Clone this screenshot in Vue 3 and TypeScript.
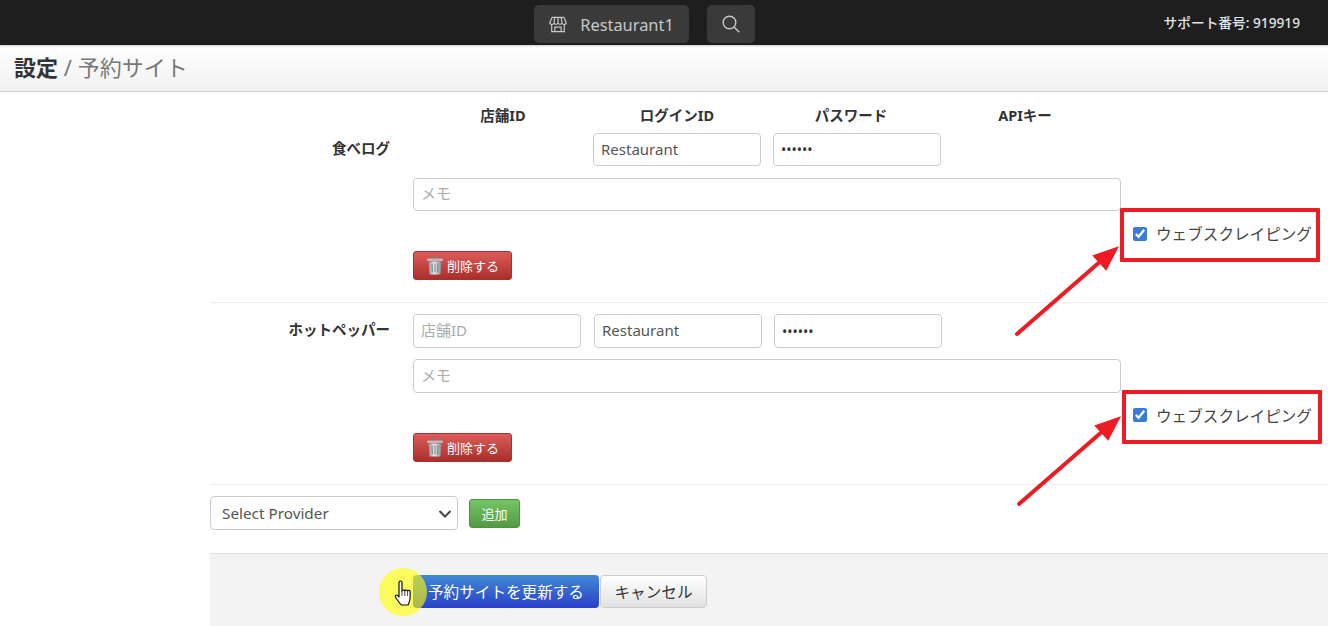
<script setup lang="ts">
// Reservation-site settings page. Each provider row has credentials, a memo,
// a scraping checkbox and a delete button. The red boxes and arrows are
// screenshot annotations, so they sit on an overlay.

interface Provider {
  name: string
  showShopId: boolean
}

const providers: Provider[] = [
  { name: '食べログ', showShopId: false },
  { name: 'ホットペッパー', showShopId: true },
]

const columns = ['店舗ID', 'ログインID', 'パスワード', 'APIキー']

const boxes = [
  { left: '1120px', top: '208px' },
  { left: '1122px', top: '390px' },
]
</script>

<template>
  <div class="page">
    <header class="topbar">
      <button class="top-btn shop-btn" type="button">
        <svg width="18" height="17" viewBox="0 0 20 18" fill="none" stroke="#c8c8c8" stroke-width="1.3">
          <path d="M3.5 1h13l2.500 5.500a2.200 2.200 0 0 1-4.500.5 2.300 2.300 0 0 1-4.500 0 2.300 2.300 0 0 1-4.500 0 2.200 2.200 0 0 1-4.500-.500z" />
          <path d="M3 9v8h14V9M6.500 1 5.500 7M13.500 1l1 6M10 1v6M6.500 17v-5h7v5" />
        </svg>
        <span>Restaurant1</span>
      </button>
      <button class="top-btn search-btn" type="button">
        <svg width="18" height="18" viewBox="0 0 18 18" fill="none" stroke="#c8c8c8" stroke-width="1.4">
          <circle cx="7.500" cy="7.500" r="6.300" />
          <path d="m12 12 5.300 5.300" />
        </svg>
      </button>
      <div class="support">サポート番号: 919919</div>
    </header>

    <div class="subheader">
      <h1><strong>設定</strong> / 予約サイト</h1>
    </div>

    <main class="content">
      <div class="col-heads">
        <span v-for="c in columns" :key="c">{{ c }}</span>
      </div>

      <section v-for="p in providers" :key="p.name" class="provider">
        <label class="provider-name">{{ p.name }}</label>
        <div class="creds">
          <input v-if="p.showShopId" class="field shop-id" placeholder="店舗ID" />
          <div v-else class="spacer" />
          <input class="field" value="Restaurant" />
          <input class="field secret" type="password" value="secret" />
        </div>
        <input class="field memo" placeholder="メモ" />
        <label class="scrape">
          <input type="checkbox" checked />
          <span>ウェブスクレイピング</span>
        </label>
        <button class="btn danger" type="button">
          <svg width="18" height="19" viewBox="0 0 18 19">
            <defs>
              <linearGradient id="can" x1="0" x2="1" y1="0" y2="0">
                <stop offset="0" stop-color="#8f9396" />
                <stop offset="0.45" stop-color="#eceeef" />
                <stop offset="1" stop-color="#85898c" />
              </linearGradient>
            </defs>
            <path d="M6.500 2.500V1h5v1.500" fill="none" stroke="#7d8184" />
            <rect x="1" y="2.500" width="16" height="2.500" rx="1" fill="#b9bcbe" />
            <path d="M2.500 5.500h13l-1 13h-11z" fill="url(#can)" />
            <path d="M6 7.500l.3 9M9 7.500v9M12 7.500l-.3 9" stroke="#777b7e" stroke-width="1" />
          </svg>
          削除する
        </button>
      </section>

      <div class="add-row">
        <div class="select-wrap">
          <select class="provider-select">
            <option>Select Provider</option>
          </select>
          <svg class="chevron" width="14" height="8" viewBox="0 0 14 8" fill="none" stroke="#444" stroke-width="2">
            <path d="m1.500 1 5.500 5.500L12.500 1" />
          </svg>
        </div>
        <button class="btn success" type="button">追加</button>
      </div>

      <footer class="actions">
        <button class="btn primary" type="button">予約サイトを更新する</button>
        <button class="btn plain" type="button">キャンセル</button>
      </footer>
    </main>

    <!-- screenshot annotations -->
    <div v-for="(b, i) in boxes" :key="i" class="red-box" :style="b" />
    <svg class="arrows" width="1328" height="626" viewBox="0 0 1328 626">
      <g fill="#ed1c24" stroke="#ed1c24" stroke-linecap="round">
        <path d="M1017 334 1102 260" stroke-width="4" fill="none" />
        <path d="M1117 248 1094 256 1106 269z" stroke-width="2" />
        <path d="M1019 504 1104 430" stroke-width="4" fill="none" />
        <path d="M1119 418 1096 426 1108 439z" stroke-width="2" />
      </g>
    </svg>

    <div class="highlight" />
    <svg class="hand" width="20" height="28" viewBox="0 0 20 28">
      <path
        d="M5 2.500c0-2 3-2 3 0V11c0-1.500 2.500-1.500 2.800 0 .2-1.300 2.600-1.300 2.800.2.300-1.200 2.600-1 2.600.6 0 3 .3 6-.6 9-.5 1.800-1 3-1.500 4.200H7.500C6 24 4 21 2 18c-1-1.500-1-3 .5-3 1 0 1.800 1 2.500 2z"
        fill="#fff"
        stroke="#111"
        stroke-width="1.200"
        stroke-linejoin="round"
      />
      <path d="M8 11v5M10.800 11v5M13.600 11.500V16" stroke="#111" stroke-width="0.800" fill="none" />
    </svg>
  </div>
</template>

<style scoped>
.page {
  position: relative;
  width: 1328px;
  height: 626px;
  overflow: hidden;
  background: #fff;
  font-family: "Noto Sans", "Noto Sans CJK JP", sans-serif;
  color: #333;
}

.topbar {
  display: flex;
  align-items: center;
  gap: 18px;
  height: 45px;
  padding: 3px 28px 0 534px;
  box-sizing: border-box;
  background: #1e1e1e;
}
.top-btn {
  display: flex;
  align-items: center;
  justify-content: center;
  height: 38px;
  border: 0;
  border-radius: 5px;
  background: #3a3a3a;
  color: #c8c8c8;
  font: inherit;
  font-size: 16px;
}
.shop-btn {
  width: 155px;
  gap: 13px;
}
.shop-btn span {
  font-size: 16.400px;
}
.search-btn {
  width: 48px;
}
.support {
  margin: 0 0 5px auto;
  color: #e4e4e4;
  font-size: 13.700px;
  font-weight: 500;
}

.subheader {
  height: 47px;
  box-sizing: border-box;
  padding-left: 14px;
  border-bottom: 1px solid #d0d0d0;
  background: linear-gradient(#fff, #f1f1f1);
  box-shadow: inset 0 2px 2px -1px #ccc;
}
h1 {
  margin: 0;
  font-size: 22px;
  font-weight: 400;
  line-height: 44px;
  color: #777;
}
h1 strong {
  color: #333;
}

.content {
  margin-left: 210px;
}
.col-heads {
  display: grid;
  grid-template-columns: repeat(4, 174px);
  align-items: center;
  height: 41px;
  padding: 3px 0 0 206px;
  box-sizing: border-box;
  font-size: 14.500px;
  font-weight: 700;
  text-align: center;
}

.provider {
  display: grid;
  grid-template-columns: 180px 708px 200px;
  column-gap: 23px;
  grid-template-rows: 33.400px 44.800px 40px 29px;
  padding-bottom: 22.200px;
}
.provider + .provider {
  padding-top: 11px;
  border-top: 1px solid #eee;
}
.provider-name {
  padding-top: 4px;
  font-size: 14.500px;
  font-weight: 700;
  text-align: right;
}
.creds {
  display: flex;
  gap: 12px;
}
.spacer {
  width: 168px;
}
.field {
  width: 168px;
  height: 33.400px;
  box-sizing: border-box;
  padding: 0 7px 2px;
  border: 1px solid #ccc;
  border-radius: 4px;
  background: #fff;
  color: #555;
  font: inherit;
  font-size: 15px;
  outline: none;
}
.field::placeholder {
  color: #aaa;
}
.secret {
  color: #333;
  font-size: 14px;
  padding-bottom: 0;
}
.shop-id {
  margin-right: 1px;
}
.memo {
  grid-column: 2;
  grid-row: 2;
  width: 708px;
  margin-top: 11.400px;
}
.scrape {
  grid-column: 3;
  grid-row: 3;
  display: flex;
  align-items: center;
  gap: 9px;
  margin: 5px 0 0 -11px;
  font-size: 15.600px;
  white-space: nowrap;
  color: #444;
}
.scrape input {
  width: 14px;
  height: 14px;
  margin: 0;
  accent-color: #3b7bd8;
}

.btn {
  box-sizing: border-box;
  border-radius: 3px;
  font: inherit;
  padding: 0;
}
.danger {
  grid-column: 2;
  grid-row: 4;
  display: flex;
  align-items: center;
  justify-content: center;
  gap: 3px;
  width: 99px;
  height: 29px;
  border: 1px solid #a5322e;
  background: linear-gradient(#dd5c59, #a92f2b);
  color: #fff;
  font-size: 13px;
}

.add-row {
  display: flex;
  align-items: center;
  gap: 11px;
  padding: 11px 0 23.200px;
  border-top: 1px solid #eee;
}
.select-wrap {
  position: relative;
  width: 248px;
  height: 34px;
}
.provider-select {
  appearance: none;
  width: 100%;
  height: 100%;
  padding: 0 11px;
  border: 1px solid #ccc;
  border-radius: 4px;
  background: #fff;
  color: #555;
  font: inherit;
  font-size: 15.300px;
}
.chevron {
  position: absolute;
  right: 6px;
  top: 14px;
}
.success {
  width: 51px;
  height: 29px;
  margin-top: 1px;
  border: 1px solid #4e9440;
  background: linear-gradient(#76c566, #529a43);
  color: #fff;
  font-size: 13px;
}

.actions {
  display: flex;
  gap: 1px;
  height: 73px;
  padding: 21px 0 0 203px;
  box-sizing: border-box;
  border-top: 1px solid #e2e2e2;
  background: #f3f3f3;
}
.primary {
  width: 186px;
  height: 33px;
  border: 0;
  border-radius: 4px;
  background: linear-gradient(#4089d4, #2a40c8);
  color: #fff;
  font-size: 15.600px;
}
.plain {
  width: 107px;
  height: 33px;
  border: 1px solid #ccc;
  border-radius: 4px;
  background: linear-gradient(#fff, #e2e2e2);
  color: #333;
  font-size: 15.600px;
}

.red-box {
  position: absolute;
  width: 200px;
  height: 54px;
  box-sizing: border-box;
  border: 4px solid #ed1c24;
  border-radius: 1px;
}
.arrows {
  position: absolute;
  inset: 0;
  pointer-events: none;
}
.highlight {
  position: absolute;
  left: 379px;
  top: 568px;
  width: 48px;
  height: 48px;
  border-radius: 50%;
  background: rgba(255, 255, 0, 0.62);
}
.hand {
  position: absolute;
  left: 394px;
  top: 580px;
}
</style>
